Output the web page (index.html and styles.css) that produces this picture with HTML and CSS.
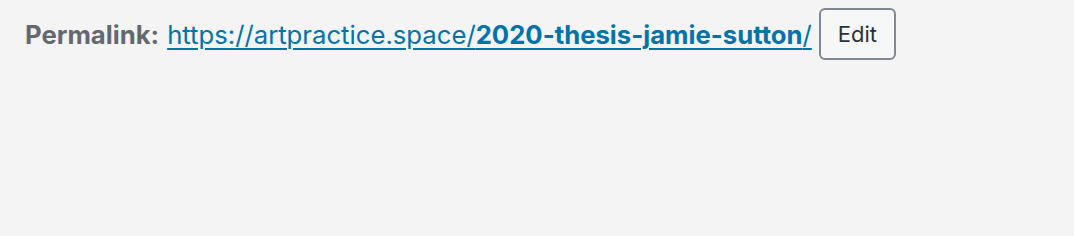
FILE: index.html
```html
<!DOCTYPE html>
<html>
<head>
<meta charset="utf-8">
<link rel="stylesheet" href="styles.css">
</head>
<body>
<div class="permalink-row">
  <strong class="label">Permalink:</strong>
  <a class="link" href="#">https://artpractice.space/<span class="slug">2020-thesis-jamie-sutton</span>/</a>
  <button class="edit-btn" type="button">Edit</button>
</div>
</body>
</html>
```
FILE: styles.css
```css
html, body {
  margin: 0;
  padding: 0;
  background: #f4f4f4;
  height: 100%;
}
body {
  font-family: Inter, "Noto Sans", sans-serif;
  font-size: 25.7px;
  color: #646970;
}
.permalink-row {
  display: flex;
  align-items: center;
  padding: 8px 0 0 25px;
  height: 52px;
}
.label {
  font-weight: 700;
  color: #646970;
  margin-right: 8px;
}
.link {
  color: #0073aa;
  text-decoration: underline;
  text-decoration-thickness: 2px;
  text-underline-offset: 4px;
}
.slug {
  font-weight: 700;
}
.edit-btn {
  margin-left: 7px;
  width: 77px;
  height: 52px;
  box-sizing: border-box;
  border: 2px solid #7e8993;
  border-radius: 6px;
  background: #f6f7f7;
  color: #2c3338;
  font-family: inherit;
  font-size: 22px;
  padding: 0;
}
```
